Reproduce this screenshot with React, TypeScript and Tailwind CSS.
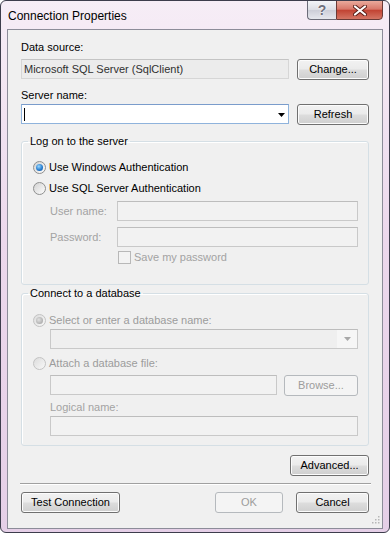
import type { ReactNode } from 'react';

function Button({ children, w, disabled }: { children: ReactNode; w: string; disabled?: boolean }) {
  return (
    <div
      className={`${w} h-[21px] shrink-0 rounded-[3px] border flex items-center justify-center leading-[13px] ${
        disabled
          ? 'border-[#b5b9bd] bg-[#f4f4f4] text-[#9c9c9c]'
          : 'border-[#707070] text-black bg-[linear-gradient(#f2f2f2_0%,#ebebeb_48%,#dddddd_52%,#cfcfcf_100%)] shadow-[inset_0_0_0_1px_#fcfcfc]'
      }`}
    >
      {children}
    </div>
  );
}

function Field({ w = 'flex-1', blue, readOnly, children }: { w?: string; blue?: boolean; readOnly?: boolean; children?: ReactNode }) {
  return (
    <div
      className={`${w} h-[20px] border flex items-center ${
        blue
          ? 'bg-white border-[#8fb3dc] border-t-[#7a9ccb]'
          : readOnly
          ? 'bg-[#ececec] border-[#d6d6d6] border-t-[#c4c4c4]'
          : 'bg-[#f2f2f2] border-[#c9c9c9] border-t-[#bdbdbd]'
      }`}
    >
      {children}
    </div>
  );
}

function Arrow({ color }: { color: string }) {
  return (
    <svg width="7" height="4" viewBox="0 0 7 4" className="shrink-0">
      <polygon points="0,0 7,0 3.5,4" fill={color} />
    </svg>
  );
}

function Radio({ checked, disabled }: { checked?: boolean; disabled?: boolean }) {
  return (
    <span
      className={`w-[13px] h-[13px] rounded-full border shrink-0 flex items-center justify-center ${
        disabled
          ? 'border-[#c3c3c3] bg-[linear-gradient(135deg,#dcdcdc,#f8f8f8)]'
          : 'border-[#8e8f8f] bg-[linear-gradient(135deg,#d2d2d2,#fdfdfd)]'
      }`}
    >
      {checked && (
        <span
          className={`w-[7px] h-[7px] rounded-full ${
            disabled
              ? 'bg-[radial-gradient(circle_at_40%_40%,#e2e2e2,#9a9a9a)]'
              : 'bg-[radial-gradient(circle_at_40%_35%,#9ad8ff,#2a7fd0_55%,#0d4f9e)]'
          }`}
        />
      )}
    </span>
  );
}

export default function App() {
  return (
    <div className="w-[390px] h-[533px] rounded-[6px] border border-[#3d3d4c] bg-[linear-gradient(180deg,#f6edf6,#ecd8ec_45%,#e5cfe7)] font-['Liberation_Sans',Arial,sans-serif] text-[11px] text-black flex flex-col overflow-hidden">
      {/* Title bar */}
      <div className="h-[28px] flex items-start shrink-0">
        <div className="flex-1 pl-[7px] pt-[8px] text-[12px] leading-[14px] text-black">Connection Properties</div>
        <div className="flex -mt-px mr-[6px]">
          <div className="w-[29px] h-[20px] rounded-bl-[4px] border border-[#6b6b78] border-r-0 bg-[linear-gradient(#f4f4f8,#dcdde4_50%,#cdced8_52%,#e6e7ee)] flex items-center justify-center">
            <span className="text-[14px] font-bold leading-none text-[#6f6f7c] [text-shadow:0_0_1px_#fff,0_0_2px_#fff]">?</span>
          </div>
          <div className="w-[47px] h-[20px] rounded-br-[4px] border border-[#6b3a36] bg-[linear-gradient(#eaaa9c,#d8786a_45%,#c24434_52%,#d47564)] flex items-center justify-center">
            <svg width="14" height="11" viewBox="0 0 14 11">
              <path d="M2 1.5 L12 9.5 M12 1.5 L2 9.5" stroke="#5a1f18" strokeWidth="4" strokeLinecap="round" />
              <path d="M2 1.5 L12 9.5 M12 1.5 L2 9.5" stroke="#ffffff" strokeWidth="2.2" strokeLinecap="round" />
            </svg>
          </div>
        </div>
      </div>

      {/* Client area */}
      <div className="relative mx-[6px] h-[500px] border border-[#8c8c99] bg-[#f0f0f0] px-[13px] leading-[13px]">
        <div className="pt-[11px]">Data source:</div>
        <div className="mt-[5px] flex items-start">
          <Field w="w-[268px]" readOnly>
            <span className="pl-[2px] text-[#303030]">Microsoft SQL Server (SqlClient)</span>
          </Field>
          <div className="ml-auto">
            <Button w="w-[72px]">Change...</Button>
          </div>
        </div>

        <div className="mt-[9px]">Server name:</div>
        <div className="mt-[2px] flex items-start">
          <Field w="w-[268px]" blue>
            <span className="ml-[2px] w-px h-[13px] bg-black" />
            <span className="flex-1" />
            <span className="mr-[3px] mt-px">
              <Arrow color="#000" />
            </span>
          </Field>
          <div className="ml-auto">
            <Button w="w-[72px]">Refresh</Button>
          </div>
        </div>

        {/* Log on group */}
        <fieldset className="mt-[10px] border border-[#d5dfe5] rounded-[3px] pl-[11px] pr-[10px] pb-[20px] shadow-[inset_1px_1px_0_#fff]">
          <legend className="-ml-[5px] px-[2px] leading-[13px]">Log on to the server</legend>
          <div className="pt-[13px] flex items-center gap-[3px] h-[13px] box-content">
            <Radio checked />
            <span>Use Windows Authentication</span>
          </div>
          <div className="mt-[8px] flex items-center gap-[3px] h-[13px]">
            <Radio />
            <span>Use SQL Server Authentication</span>
          </div>
          <div className="mt-[6px] flex items-center">
            <span className="ml-[17px] w-[67px] text-[#a3a3a3]">User name:</span>
            <Field />
          </div>
          <div className="mt-[6px] flex items-center">
            <span className="ml-[17px] w-[67px] text-[#a3a3a3]">Password:</span>
            <Field />
          </div>
          <div className="mt-[4px] ml-[85px] flex items-center gap-[3px] h-[13px]">
            <span className="w-[13px] h-[13px] border border-[#b8b8b8] bg-[#f3f3f3] shrink-0" />
            <span className="text-[#a3a3a3]">Save my password</span>
          </div>
        </fieldset>

        {/* Database group */}
        <fieldset className="mt-[2px] border border-[#d5dfe5] rounded-[3px] pl-[11px] pr-[10px] pb-[9px] shadow-[inset_1px_1px_0_#fff]">
          <legend className="-ml-[5px] px-[2px] leading-[13px]">Connect to a database</legend>
          <div className="pt-[14px] flex items-center gap-[3px] h-[13px] box-content">
            <Radio checked disabled />
            <span className="text-[#9c9c9c]">Select or enter a database name:</span>
          </div>
          <div className="mt-[2px] ml-[17px] flex">
            <Field>
              <span className="flex-1 h-full bg-[#efefef]" />
              <span className="w-[20px] h-full bg-[#f6f6f6] flex items-center justify-center">
                <Arrow color="#a8a8a8" />
              </span>
            </Field>
          </div>
          <div className="mt-[8px] flex items-center gap-[3px] h-[13px]">
            <Radio disabled />
            <span className="text-[#9c9c9c]">Attach a database file:</span>
          </div>
          <div className="mt-[5px] ml-[17px] flex items-start">
            <Field w="w-[227px]" />
            <div className="ml-auto">
              <Button w="w-[74px]" disabled>
                Browse...
              </Button>
            </div>
          </div>
          <div className="mt-[5px] ml-[17px] text-[#a3a3a3]">Logical name:</div>
          <div className="mt-[2px] ml-[17px] flex">
            <Field />
          </div>
        </fieldset>

        <div className="mt-[9px] flex justify-end">
          <Button w="w-[79px]">Advanced...</Button>
        </div>

        <div className="mt-[7px] -ml-px -mr-[2px] border-t border-[#a0a0a0] border-b border-b-white" />

        <div className="mt-[7px] flex items-start">
          <Button w="w-[99px]">Test Connection</Button>
          <div className="ml-auto flex gap-[13px]">
            <Button w="w-[68px]" disabled>
              OK
            </Button>
            <Button w="w-[73px]">Cancel</Button>
          </div>
        </div>

        {/* size grip */}
        <svg width="10" height="10" viewBox="0 0 10 10" className="absolute right-[2px] bottom-[3px]">
          {[
            [8, 0], [8, 3], [5, 3], [8, 6], [5, 6], [2, 6],
          ].map(([x, y]) => (
            <rect key={`${x}-${y}`} x={x} y={y + 1} width="1.5" height="1.5" fill="#b7b7b7" />
          ))}
        </svg>
      </div>
    </div>
  );
}
